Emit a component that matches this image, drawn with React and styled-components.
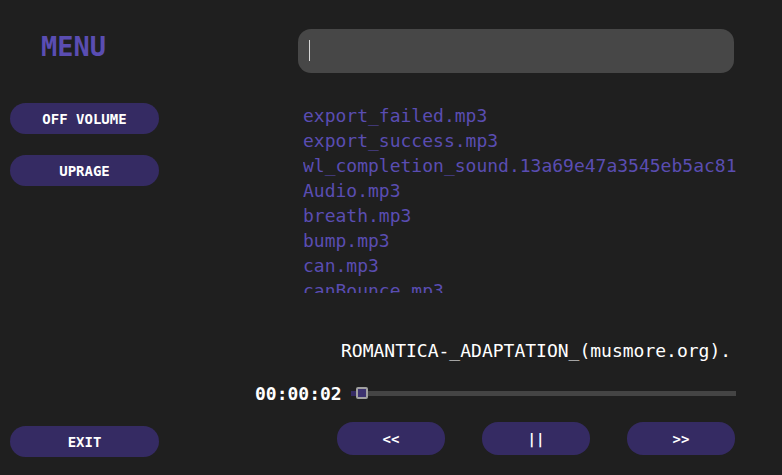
import React from "react";
import styled, { createGlobalStyle } from "styled-components";

const GlobalStyle = createGlobalStyle`
  html, body {
    margin: 0;
    padding: 0;
    background: #1f1f1f;
  }
  * {
    box-sizing: border-box;
  }
`;

const Page = styled.div`
  display: flex;
  width: 782px;
  height: 475px;
  background: #1f1f1f;
  font-family: "DejaVu Sans Mono", "Liberation Mono", monospace;
  overflow: hidden;
`;

const Sidebar = styled.aside`
  display: flex;
  flex-direction: column;
  width: 240px;
  padding: 32px 0 18px 10px;
`;

const MenuTitle = styled.h1`
  margin: 0 0 0 31px;
  font-size: 27px;
  line-height: 30px;
  font-weight: 700;
  color: #5a4db2;
`;

const SideButtons = styled.div`
  display: flex;
  flex-direction: column;
  gap: 21px;
  margin-top: 41px;
`;

const PillButton = styled.button`
  width: ${({ $width }) => $width || "149px"};
  height: ${({ $height }) => $height || "31px"};
  border: none;
  border-radius: 16px;
  background: #352b63;
  color: #ffffff;
  font-family: inherit;
  font-size: 14px;
  font-weight: 700;
  cursor: pointer;
`;

const Spacer = styled.div`
  flex: 1;
`;

const Main = styled.main`
  display: flex;
  flex-direction: column;
  flex: 1;
  padding-top: 29px;
`;

const SearchBox = styled.div`
  position: relative;
  width: 436px;
  height: 44px;
  margin-left: 58px;

  &::after {
    content: "";
    position: absolute;
    left: 11px;
    top: 11px;
    width: 1px;
    height: 21px;
    background: #d8d8d8;
  }
`;

const SearchInput = styled.input`
  width: 100%;
  height: 100%;
  padding: 0 10px;
  border: none;
  border-radius: 13px;
  background: #474747;
  color: #ddd;
  caret-color: transparent;
  font-family: inherit;
  font-size: 22px;
  outline: none;
`;

const FileList = styled.ul`
  list-style: none;
  margin: 30px 0 0 63px;
  padding: 0;
  width: 434px;
  height: 190px;
  overflow: hidden;
`;

const FileItem = styled.li`
  font-size: 18px;
  line-height: 25px;
  color: #5a4db2;
  white-space: nowrap;
`;

const TrackTitle = styled.div`
  margin: 45px 0 0 101px;
  width: 388px;
  overflow: hidden;
  font-size: 18px;
  line-height: 25px;
  color: #ffffff;
  white-space: nowrap;
`;

const TimeRow = styled.div`
  display: flex;
  align-items: center;
  gap: 9px;
  margin: 18px 0 0 15px;
  height: 25px;
`;

const TimeLabel = styled.span`
  font-size: 18px;
  font-weight: 700;
  color: #ffffff;
`;

const Track = styled.div`
  position: relative;
  width: 385px;
  height: 5px;
  background: #444444;
`;

const TrackFill = styled.div`
  height: 100%;
  background: #352b63;
`;

const Thumb = styled.div`
  position: absolute;
  top: -4px;
  width: 12px;
  height: 12px;
  margin-left: -6px;
  border: 2px solid #a0a0a0;
  border-radius: 2px;
  background: #3d3370;
`;

const Controls = styled.div`
  display: flex;
  gap: 37px;
  margin: 16px 0 0 97px;
`;

const files = [
  "export_failed.mp3",
  "export_success.mp3",
  "wl_completion_sound.13a69e47a3545eb5ac81.mp3",
  "Audio.mp3",
  "breath.mp3",
  "bump.mp3",
  "can.mp3",
  "canBounce.mp3",
  "chime.mp3",
];

export default function App() {
  const progress = 3;
  return (
    <>
      <GlobalStyle />
      <Page>
        <Sidebar>
          <MenuTitle>MENU</MenuTitle>
          <SideButtons>
            <PillButton>OFF VOLUME</PillButton>
            <PillButton>UPRAGE</PillButton>
          </SideButtons>
          <Spacer />
          <PillButton>EXIT</PillButton>
        </Sidebar>
        <Main>
          <SearchBox>
            <SearchInput />
          </SearchBox>
          <FileList>
            {files.map((f) => (
              <FileItem key={f}>{f}</FileItem>
            ))}
          </FileList>
          <TrackTitle>ROMANTICA-_ADAPTATION_(musmore.org).mp3</TrackTitle>
          <TimeRow>
            <TimeLabel>00:00:02</TimeLabel>
            <Track>
              <TrackFill style={{ width: `${progress}%` }} />
              <Thumb style={{ left: `${progress}%` }} />
            </Track>
          </TimeRow>
          <Controls>
            <PillButton $width="108px" $height="33px">&lt;&lt;</PillButton>
            <PillButton $width="108px" $height="33px">||</PillButton>
            <PillButton $width="108px" $height="33px">&gt;&gt;</PillButton>
          </Controls>
        </Main>
      </Page>
    </>
  );
}
